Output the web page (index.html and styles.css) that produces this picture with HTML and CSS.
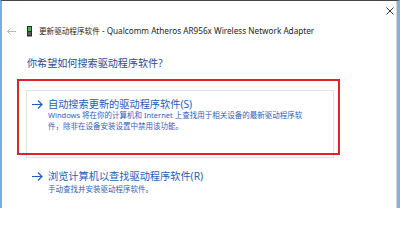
FILE: index.html
```html
<!DOCTYPE html>
<html lang="zh-CN">
<head>
<meta charset="utf-8">
<title>更新驱动程序软件</title>
<link rel="stylesheet" href="styles.css">
</head>
<body>
<div class="window">
  <div class="titlebar">
    <span class="close" aria-label="关闭">
      <svg width="8" height="8" viewBox="0 0 8 8"><path d="M0.5 0.5L7.5 7.5M7.5 0.5L0.5 7.5" stroke="#333" stroke-width="1" fill="none"/></svg>
    </span>
  </div>
  <div class="nav">
    <svg class="back" width="9" height="7" viewBox="0 0 9 7"><path d="M0.5 3.5H9M3.5 0.5L0.5 3.5L3.5 6.5" stroke="#b8b8b8" stroke-width="1" fill="none"/></svg>
    <svg class="device" width="5" height="11" viewBox="0 0 5 11">
      <rect x="0" y="0" width="5" height="11" fill="#2b2b2b"/>
      <rect x="1" y="1" width="3" height="4" fill="#4caf50"/>
      <rect x="1" y="6" width="3" height="3" fill="#5a5a5a"/>
      <rect x="0" y="10" width="5" height="1" fill="#9a9a9a"/>
    </svg>
    <span class="title">更新驱动程序软件<span class="title-lat"> - Qualcomm Atheros AR956x Wireless Network Adapter</span></span>
  </div>
  <h1 class="heading">你希望如何搜索驱动程序软件?</h1>
  <div class="options">
    <div class="option boxed">
      <svg class="arrow" width="11" height="12" viewBox="0 0 11 12"><path d="M0 6.5H10M6 2.5L10 6.5L6 10.5" stroke="#1b5ec3" stroke-width="1.2" fill="none"/></svg>
      <div class="texts">
        <div class="link">自动搜索更新的驱动程序软件(S)</div>
        <div class="note">Windows 将在你的计算机和 Internet 上查找用于相关设备的最新驱动程序软件，除非在设备安装设置中禁用该功能。</div>
      </div>
    </div>
    <div class="option">
      <svg class="arrow" width="11" height="12" viewBox="0 0 11 12"><path d="M0 6.5H10M6 2.5L10 6.5L6 10.5" stroke="#1b5ec3" stroke-width="1.2" fill="none"/></svg>
      <div class="texts">
        <div class="link">浏览计算机以查找驱动程序软件(R)</div>
        <div class="note note-gap">手动查找并安装驱动程序软件。</div>
      </div>
    </div>
  </div>
  <div class="highlight"></div>
</div>
</body>
</html>
```

FILE: styles.css
```css
html, body {
  margin: 0;
  padding: 0;
  background: #ffffff;
}

.window {
  position: relative;
  width: 400px;
  height: 208px;
  box-sizing: border-box;
  background: #ffffff;
  border-top: 1px solid #474747;
  border-left: 2px solid #7aaee0;
  border-right: 3px solid #7fb2e2;
  box-shadow: inset -1px 0 0 #d4d4d4;
  font-family: "Noto Sans", "Noto Sans CJK SC", sans-serif;
  overflow: hidden;
}

.titlebar {
  height: 19px;
  display: flex;
  align-items: center;
  justify-content: flex-end;
  padding-right: 3px;
}

.close {
  display: flex;
  width: 8px;
  height: 8px;
}

.nav {
  height: 22px;
  display: flex;
  align-items: center;
  padding-left: 5px;
}

.back {
  margin-right: 11px;
}

.device {
  margin-right: 7px;
}

.title {
  font-size: 7.6px;
  line-height: 12px;
  color: #1e1e1e;
  white-space: nowrap;
}

.title-lat {
  font-size: 8.2px;
}

.heading {
  margin: 14px 0 0 25px;
  font-size: 10.1px;
  line-height: 14px;
  font-weight: normal;
  color: #2a4a9c;
}

.options {
  margin: 20px 0 0 24px;
  display: flex;
  flex-direction: column;
  gap: 4px;
}

.option {
  width: 308px;
  box-sizing: border-box;
  border: 1px solid transparent;
  padding: 7px 6px 0 5px;
  display: flex;
  align-items: flex-start;
  gap: 5px;
}

.option.boxed {
  height: 68px;
  border-color: #e3e3e3;
}

.arrow {
  flex: none;
}

.texts {
  display: flex;
  flex-direction: column;
}

.link {
  font-size: 10.2px;
  line-height: 12px;
  color: #1b5ec3;
  white-space: nowrap;
}

.note {
  max-width: 264px;
  font-size: 7.5px;
  line-height: 11px;
  color: #2f63c0;
}

.note-gap {
  margin-top: 2px;
}

.highlight {
  position: absolute;
  left: 15px;
  top: 78px;
  width: 323px;
  height: 76px;
  box-sizing: border-box;
  border: 2px solid #e0222c;
  pointer-events: none;
}
```
